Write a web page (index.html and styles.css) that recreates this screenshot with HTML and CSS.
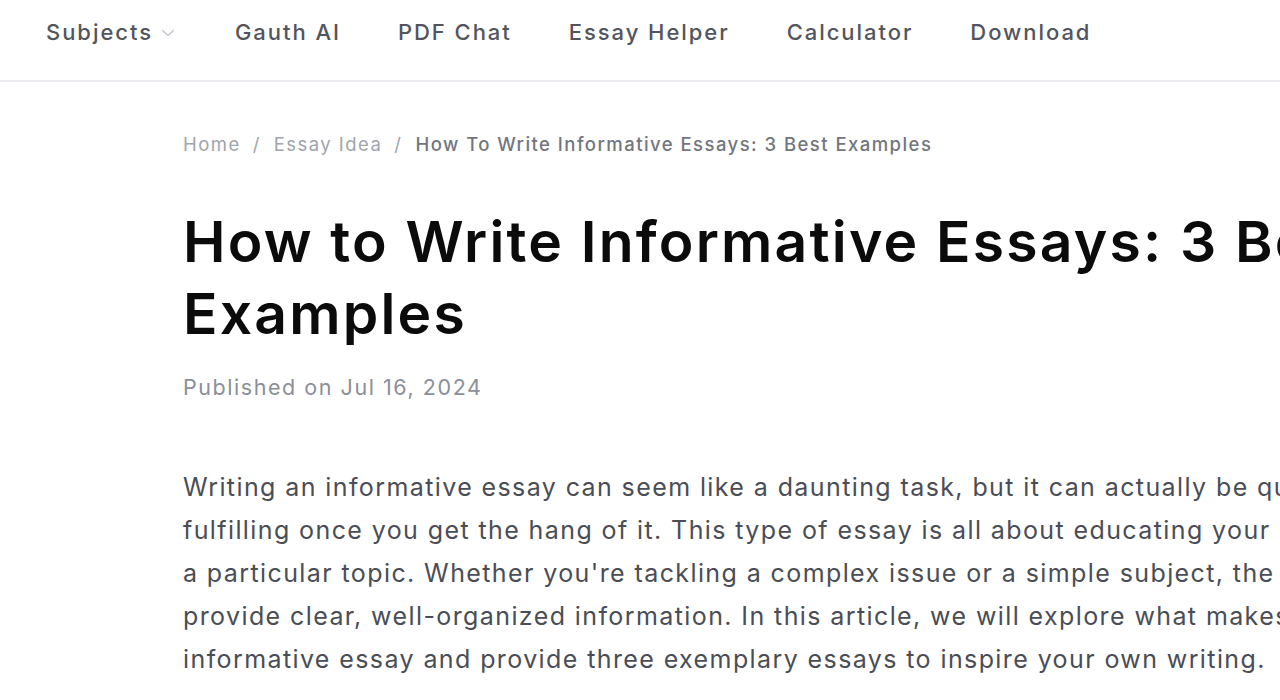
FILE: index.html
```html
<!DOCTYPE html>
<html lang="en">
<head>
<meta charset="utf-8">
<title>How to Write Informative Essays: 3 Best Examples</title>
<link rel="stylesheet" href="styles.css">
</head>
<body>
<header class="topbar">
  <nav class="nav">
    <a class="nav-item has-caret" href="#">Subjects
      <svg class="caret" viewBox="0 0 14 8" width="14" height="8"><path d="M1.5 1.5 L7 6.5 L12.5 1.5" fill="none" stroke="#c2c5cc" stroke-width="1.3" stroke-linecap="round" stroke-linejoin="round"/></svg>
    </a>
    <a class="nav-item" href="#">Gauth AI</a>
    <a class="nav-item" href="#">PDF Chat</a>
    <a class="nav-item" href="#">Essay Helper</a>
    <a class="nav-item" href="#">Calculator</a>
    <a class="nav-item" href="#">Download</a>
  </nav>
</header>
<main class="article">
  <div class="crumbs">
    <a href="#" class="crumb">Home</a><span class="sep">/</span><a href="#" class="crumb">Essay Idea</a><span class="sep">/</span><span class="crumb current">How To Write Informative Essays: 3 Best Examples</span>
  </div>
  <h1 class="title">How to Write Informative Essays: 3 Best<br>Examples</h1>
  <p class="date">Published on Jul 16, 2024</p>
  <p class="lead">Writing an informative essay can seem like a daunting task, but it can actually be quite<br>fulfilling once you get the hang of it. This type of essay is all about educating your readers on<br>a particular topic. Whether you're tackling a complex issue or a simple subject, the goal is to<br>provide clear, well-organized information. In this article, we will explore what makes a great<br>informative essay and provide three exemplary essays to inspire your own writing.</p>
</main>
</body>
</html>
```
FILE: styles.css
```css
html, body {
  margin: 0;
  padding: 0;
  overflow: hidden;
  background: #fff;
}
body {
  font-family: Inter, "Noto Sans", sans-serif;
  color: #1a1a1a;
}
.topbar {
  height: 82px;
  border-bottom: 2px solid #ebecef;
  box-sizing: border-box;
  display: flex;
  align-items: center;
}
.nav {
  display: flex;
  align-items: center;
  gap: 57px;
  padding-left: 46px;
  margin-top: -16px;
}
.nav-item {
  font-size: 22px;
  font-weight: 500;
  letter-spacing: 1.95px;
  color: #52555d;
  text-decoration: none;
  display: flex;
  align-items: center;
  gap: 8px;
  white-space: nowrap;
}
.has-caret { margin-right: 3px; }
.caret { margin-top: 2px; }
.article {
  padding-left: 183px;
  width: 1400px;
}
.crumbs {
  margin-top: 50px;
  font-size: 18.5px;
  letter-spacing: 1.45px;
  display: flex;
  align-items: center;
  white-space: nowrap;
  height: 24px;
}
.crumb {
  color: #a0a4ad;
  text-decoration: none;
}
.crumb.current {
  color: #72767f;
  font-weight: 500;
}
.sep {
  color: #a0a4ad;
  margin: 0 13px 0 12px;
}
.title {
  margin: 50px 0 0;
  font-size: 57px;
  line-height: 72px;
  font-weight: 600;
  letter-spacing: 2.2px;
  color: #0b0b0b;
  white-space: nowrap;
}
.date {
  margin: 23px 0 0;
  font-size: 21.5px;
  line-height: 28px;
  letter-spacing: 1.55px;
  color: #8b8f98;
}
.lead {
  margin: 65px 0 0;
  font-size: 25px;
  line-height: 43px;
  letter-spacing: 1.4px;
  color: #4a4d55;
  white-space: nowrap;
}
```
